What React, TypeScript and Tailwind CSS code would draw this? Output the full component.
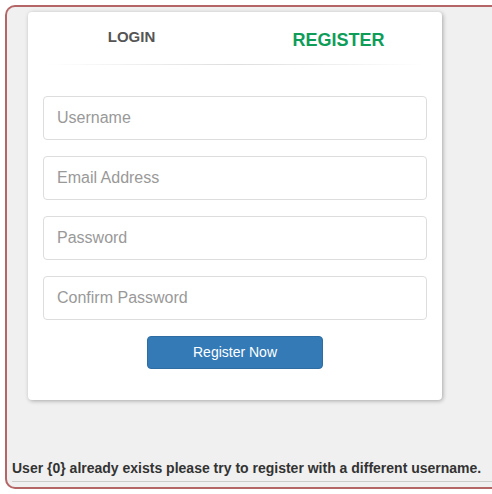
import React from "react";

const fields = ["Username", "Email Address", "Password", "Confirm Password"];

export default function App() {
  return (
    <div className="min-h-[494px] w-[492px] overflow-hidden bg-white pl-[5px] pt-[5px] font-['Liberation_Sans',Arial,sans-serif]">
      <div className="flex h-[484px] w-[520px] flex-col rounded-l-[10px] border-2 border-r-0 border-[#b46565] bg-[#f0f0f0]">
        <div className="ml-[21px] mt-[5px] flex h-[388px] w-[414px] flex-col rounded-[4px] bg-white shadow-[1px_1px_4px_rgba(0,0,0,0.3)]">
          <div className="flex pt-[17px]">
            <div className="flex w-1/2 justify-center">
              <span className="text-[15px] font-bold leading-none text-[#555555]">LOGIN</span>
            </div>
            <div className="flex w-1/2 justify-center">
              <span className="pt-[2px] text-[18px] font-bold leading-none text-[#0e9d58]">REGISTER</span>
            </div>
          </div>
          <div className="mx-[17px] mt-[15px] h-px bg-[linear-gradient(to_right,rgba(0,0,0,0),rgba(0,0,0,0.13),rgba(0,0,0,0))]" />
          <div className="mt-[31px] flex flex-col gap-4 px-[15px]">
            {fields.map((f) => (
              <input
                key={f}
                placeholder={f}
                className="h-[44px] w-full rounded-[4px] border border-[#dddddd] bg-white px-[13px] text-[16px] text-[#555555] placeholder:text-[#999999] focus:outline-none"
              />
            ))}
          </div>
          <div className="mt-4 flex justify-center">
            <button className="h-[33px] w-[176px] rounded-[4px] border border-[#2e6da4] bg-[#337ab7] text-[14px] text-white">
              Register Now
            </button>
          </div>
        </div>
        <div className="mt-auto mb-[5px] ml-[5px] border-b border-[#cccccc] pb-[5px]">
          <p className="text-[14px] font-bold leading-[16px] text-[#333333]">
            User {"{0}"} already exists please try to register with a different username.
          </p>
        </div>
      </div>
    </div>
  );
}
